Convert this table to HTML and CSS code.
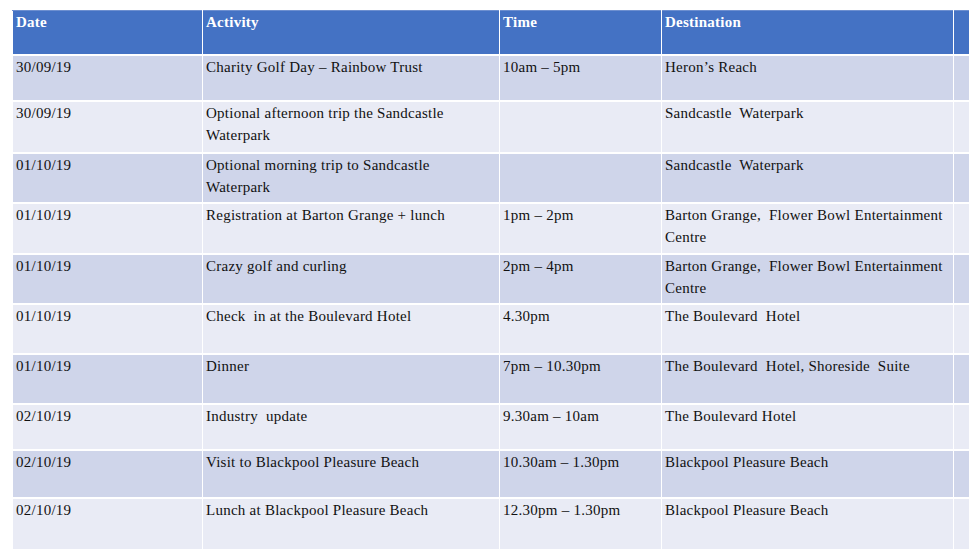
FILE: index.html
```html
<!DOCTYPE html>
<html lang="en">
<head>
<meta charset="utf-8">
<title>Itinerary</title>
<link rel="stylesheet" href="styles.css">
</head>
<body>
<div class="page">
  <table class="itinerary">
    <colgroup>
      <col class="c-date">
      <col class="c-activity">
      <col class="c-time">
      <col class="c-dest">
      <col class="c-extra">
    </colgroup>
    <thead>
      <tr>
        <th>Date</th>
        <th>Activity</th>
        <th>Time</th>
        <th>Destination</th>
        <th></th>
      </tr>
    </thead>
    <tbody>
      <tr class="r1">
        <td>30/09/19</td>
        <td>Charity Golf Day – Rainbow Trust</td>
        <td>10am – 5pm</td>
        <td>Heron’s Reach</td>
        <td></td>
      </tr>
      <tr class="r2">
        <td>30/09/19</td>
        <td>Optional afternoon trip the Sandcastle Waterpark</td>
        <td></td>
        <td>Sandcastle&nbsp; Waterpark</td>
        <td></td>
      </tr>
      <tr class="r3">
        <td>01/10/19</td>
        <td>Optional morning trip to Sandcastle Waterpark</td>
        <td></td>
        <td>Sandcastle&nbsp; Waterpark</td>
        <td></td>
      </tr>
      <tr class="r4">
        <td>01/10/19</td>
        <td>Registration at Barton Grange + lunch</td>
        <td>1pm – 2pm</td>
        <td>Barton Grange,&nbsp; Flower Bowl Entertainment Centre</td>
        <td></td>
      </tr>
      <tr class="r5">
        <td>01/10/19</td>
        <td>Crazy golf and curling</td>
        <td>2pm – 4pm</td>
        <td>Barton Grange,&nbsp; Flower Bowl Entertainment Centre</td>
        <td></td>
      </tr>
      <tr class="r6">
        <td>01/10/19</td>
        <td>Check&nbsp; in at the Boulevard Hotel</td>
        <td>4.30pm</td>
        <td>The Boulevard&nbsp; Hotel</td>
        <td></td>
      </tr>
      <tr class="r7">
        <td>01/10/19</td>
        <td>Dinner</td>
        <td>7pm – 10.30pm</td>
        <td>The Boulevard&nbsp; Hotel, Shoreside&nbsp; Suite</td>
        <td></td>
      </tr>
      <tr class="r8">
        <td>02/10/19</td>
        <td>Industry&nbsp; update</td>
        <td>9.30am – 10am</td>
        <td>The Boulevard Hotel</td>
        <td></td>
      </tr>
      <tr class="r9">
        <td>02/10/19</td>
        <td>Visit to Blackpool Pleasure Beach</td>
        <td>10.30am – 1.30pm</td>
        <td>Blackpool Pleasure Beach</td>
        <td></td>
      </tr>
      <tr class="r10">
        <td>02/10/19</td>
        <td>Lunch at Blackpool Pleasure Beach</td>
        <td>12.30pm – 1.30pm</td>
        <td>Blackpool Pleasure Beach</td>
        <td></td>
      </tr>
    </tbody>
  </table>
</div>
</body>
</html>
```

FILE: styles.css
```css
html, body {
  margin: 0;
  padding: 0;
  background: #ffffff;
}

.page {
  padding: 10px 0 0 12px;
}

.itinerary {
  table-layout: fixed;
  width: 957px;
  border-collapse: collapse;
  font-family: "Liberation Serif", "Times New Roman", serif;
  font-size: 15px;
  letter-spacing: 0.25px;
  line-height: 22px;
  color: #111111;
}

.c-date { width: 190px; }
.c-activity { width: 297px; }
.c-time { width: 162px; }
.c-dest { width: 292px; }
.c-extra { width: 16px; }

.itinerary th,
.itinerary td {
  padding: 0 2px 0 3px;
  vertical-align: top;
  text-align: left;
  border-left: 1px solid #ffffff;
  border-right: 1px solid #ffffff;
  border-top: 2px solid #ffffff;
  border-bottom: 0;
  box-sizing: border-box;
}

.itinerary th {
  background: #4472c4;
  color: #ffffff;
  font-weight: bold;
  height: 44px;
  padding-top: 0;
  border-top: 1px solid #6d8fd0;
}

.itinerary tbody tr:nth-child(odd) td {
  background: #cfd5ea;
}

.itinerary tbody tr:nth-child(even) td {
  background: #e9ebf5;
}

.r1 td { height: 46px; }
.r2 td { height: 52px; }
.r3 td { height: 50px; }
.r4 td { height: 51px; }
.r5 td { height: 50px; }
.r6 td { height: 50px; }
.r7 td { height: 50px; }
.r8 td { height: 46px; }
.r9 td { height: 48px; }
.r10 td { height: 51px; }
```
